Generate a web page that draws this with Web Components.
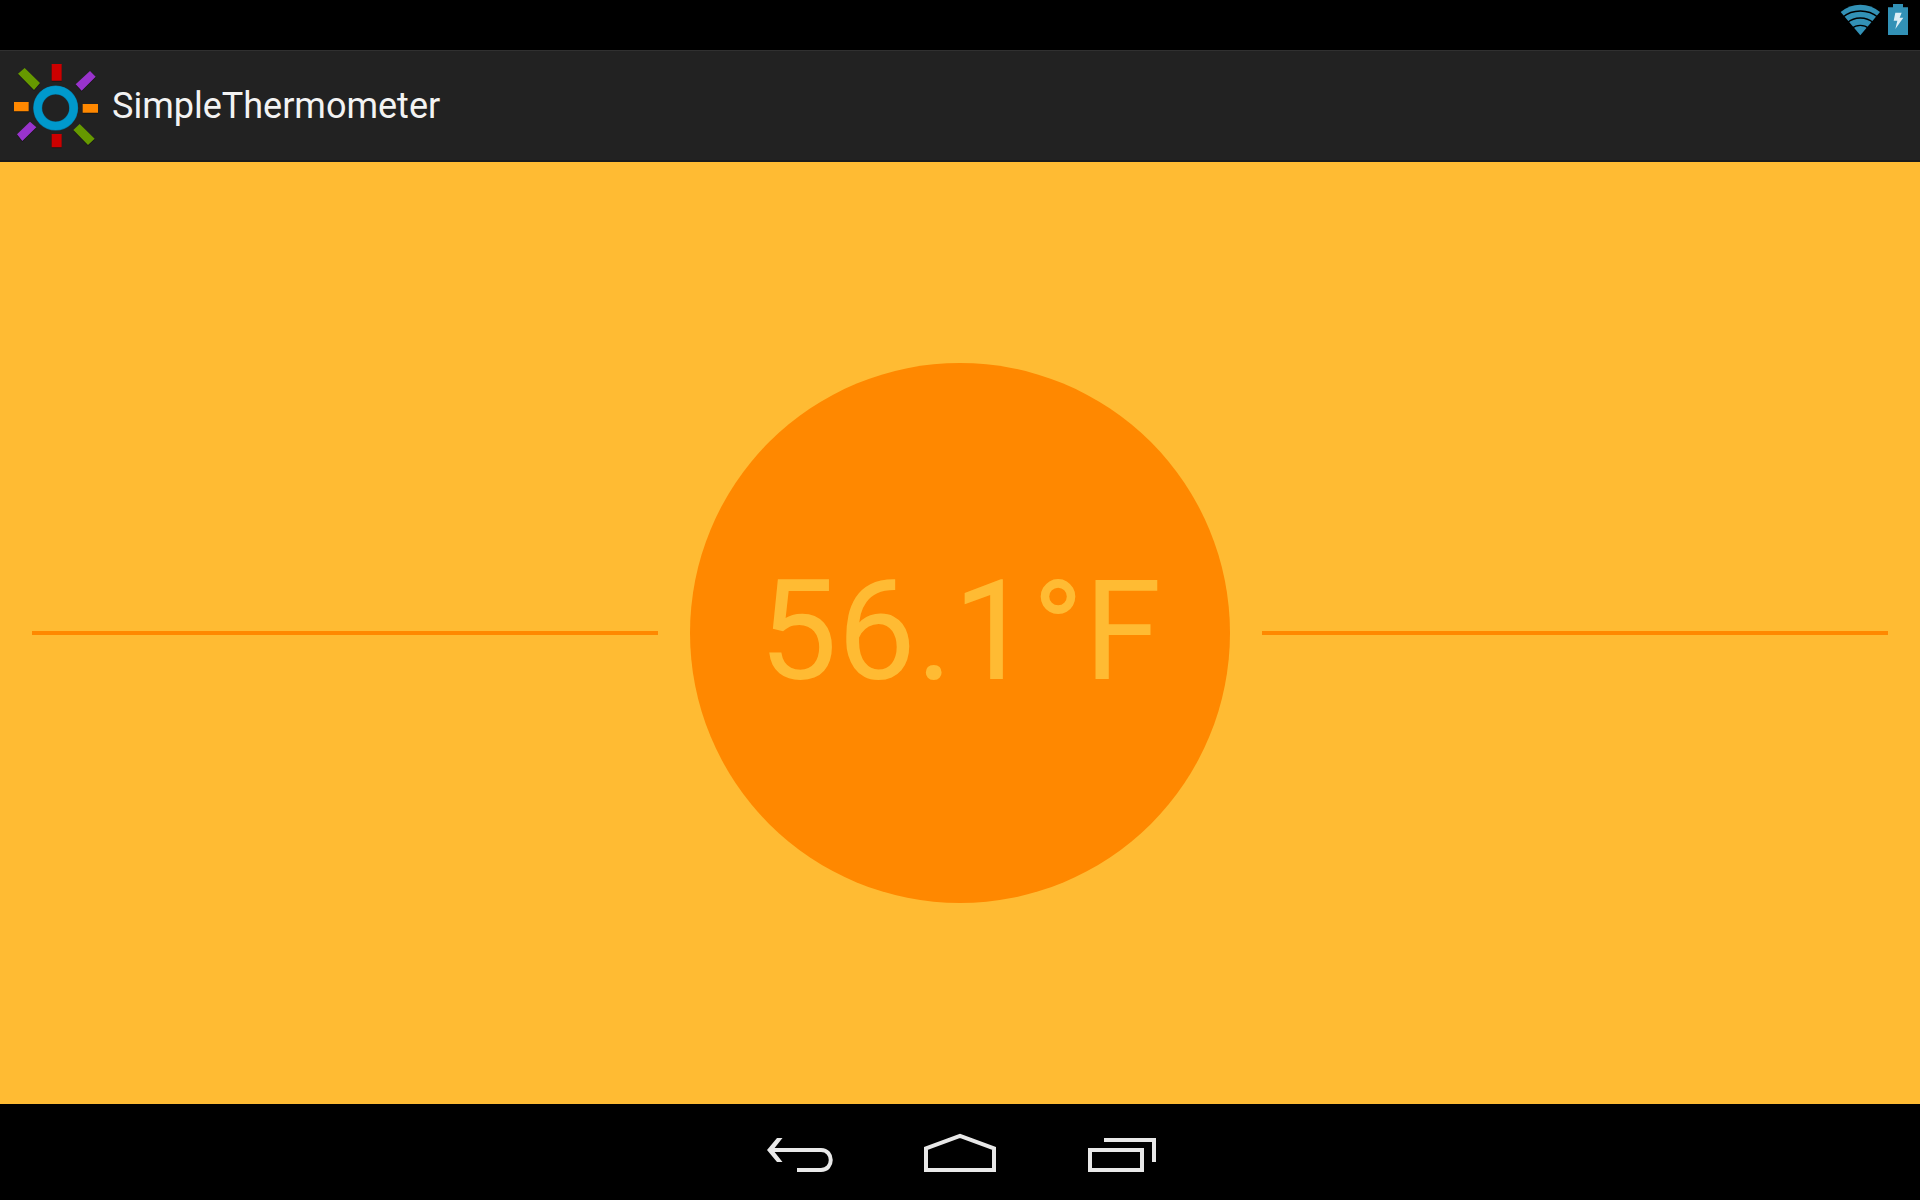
<!DOCTYPE html>
<html lang="en">
<head>
<meta charset="utf-8">
<title>SimpleThermometer</title>
<style>
html, body { height: 100%; margin: 0; background: #000; }
body { font-family: Roboto, "Noto Sans", sans-serif; }
</style>
</head>
<body>
<device-screen>
  <status-bar slot="status"></status-bar>
  <action-bar slot="header">SimpleThermometer</action-bar>
  <temperature-dial>56.1°F</temperature-dial>
  <navigation-bar slot="navigation"></navigation-bar>
</device-screen>
<script>
const define = (name, markup) => customElements.define(name, class extends HTMLElement {
  constructor() {
    super();
    const template = document.createElement('template');
    template.innerHTML = markup;
    this.attachShadow({ mode: 'open' }).append(template.content.cloneNode(true));
  }
});

define('device-screen', `
<style>
:host { display: flex; flex-direction: column; min-height: 100vh; }
main { flex: 1; display: flex; }
</style>
<slot name="status"></slot>
<slot name="header"></slot>
<main><slot></slot></main>
<slot name="navigation"></slot>`);

define('status-bar', `
<style>
:host { display: flex; justify-content: flex-end; gap: 8px; height: 50px; padding-right: 12px; background: #000; }
svg { height: 40px; display: block; }
</style>
<svg width="40" viewBox="0 0 120 120" role="img" aria-label="Wi-Fi">
  <path fill="#3291b6" d="M61 106L2 36Q28 14 61 14T120 36Z"/>
  <g fill="none" stroke="#000" stroke-width="4">
    <path d="M8 52Q30 33 61 33T114 52"/><path d="M22 68Q38 54 61 54T100 68"/><path d="M36 85Q46 76 61 76T86 85"/>
  </g>
</svg>
<svg width="20" viewBox="0 0 60 120" role="img" aria-label="Battery charging">
  <path fill="#3291b6" d="M0 22H15V12H45V22H60V105H0Z"/>
  <path fill="#dceef5" d="M22 38H41L35 53H46L22 87L28 62H17Z"/>
</svg>`);

define('action-bar', `
<style>
:host { display: block; }
header { display: flex; align-items: center; height: 112px; background: #222; box-sizing: border-box; border-bottom: 2px solid #1a1a1a; border-top: 1px solid #303030; }
svg { width: 112px; height: 112px; display: block; }
h1 { margin: 0; font-size: 36px; line-height: 44px; font-weight: 400; color: #f3f3f3; }
</style>
<header>
<svg viewBox="0 30 336 336" aria-hidden="true">
  <g fill="#000" fill-opacity=".35" transform="translate(0 3)">
  <path d="M155 72H185V122H155ZM155 282H185V322H155ZM42 186H86V214H42ZM248 192H294V218H248ZM54 101L74 84L120 129L102 150ZM220 270L239 252L284 296L264 315ZM227 133L270 93L287 110L245 152ZM51 283L90 245L109 262L67 303Z"/>
  </g>
  <path fill="#c00" d="M155 72H185V122H155ZM155 282H185V322H155Z"/>
  <path fill="#f80" d="M42 186H86V214H42ZM248 192H294V218H248Z"/>
  <path fill="#690" d="M54 101L74 84L120 129L102 150ZM220 270L239 252L284 296L264 315Z"/>
  <path fill="#93c" d="M227 133L270 93L287 110L245 152ZM51 283L90 245L109 262L67 303Z"/>
  <circle cx="167" cy="204" r="54" fill="none" stroke="#007aa6" stroke-width="27"/>
  <circle cx="167" cy="204" r="54" fill="none" stroke="#09c" stroke-width="24"/>
</svg>
<h1><slot></slot></h1>
</header>`);

define('temperature-dial', `
<style>
:host { flex: 1; display: flex; align-items: center; gap: 32px; padding: 0 32px; background: #fb3; }
.rule { flex: 1; height: 4px; background: #f80; }
.dial { display: grid; place-items: center; box-sizing: border-box; width: 540px; height: 540px; padding-bottom: 4px; border-radius: 50%; background: #f80; color: #fb3; font-size: 140px; line-height: 164px; white-space: nowrap; }
</style>
<div class="rule"></div>
<div class="dial"><span><slot></slot></span></div>
<div class="rule"></div>`);

define('navigation-bar', `
<style>
:host { display: block; background: #000; }
nav { display: flex; justify-content: center; height: 96px; }
button { width: 160px; height: 96px; padding: 0; border: 0; background: none; }
svg { display: block; width: 160px; height: 96px; fill: none; stroke: #e8e8e8; stroke-width: 4; }
</style>
<nav aria-label="System">
<button aria-label="Back"><svg viewBox="0 0 160 96"><path d="M50 46H101C114 46 114 66 101 66H77"/><path fill="#e8e8e8" stroke="none" d="M47 46L57 34H62.5L53 46L62.5 58H57Z"/></svg></button>
<button aria-label="Home"><svg viewBox="0 0 160 96"><path d="M46 66V44.4L80 31.8L114 44.4V66Z"/></svg></button>
<button aria-label="Recent apps"><svg viewBox="0 0 160 96"><path d="M50 46H102V66H50ZM64 36H114V58"/></svg></button>
</nav>`);
</script>
</body>
</html>
